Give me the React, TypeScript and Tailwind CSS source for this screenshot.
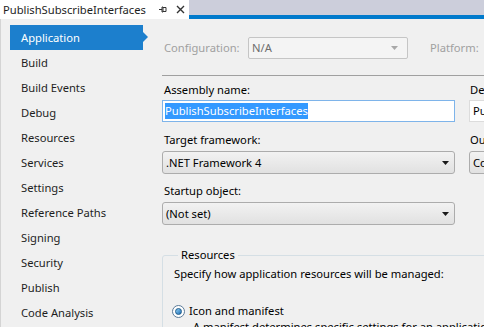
const navItems = [
  "Application",
  "Build",
  "Build Events",
  "Debug",
  "Resources",
  "Services",
  "Settings",
  "Reference Paths",
  "Signing",
  "Security",
  "Publish",
  "Code Analysis",
];

function ComboArrow({ color }: { color: string }) {
  return (
    <svg width="7" height="4" viewBox="0 0 7 4" className="shrink-0">
      <path d="M0 0h7L3.5 4z" fill={color} />
    </svg>
  );
}

function Combo({ text }: { text: string }) {
  return (
    <div className="h-[23px] flex items-center justify-between rounded-[3px] border border-[#acacac] bg-gradient-to-b from-[#f2f2f2] to-[#e1e1e1] pl-[3px] pr-[5px] text-black">
      <span>{text}</span>
      <ComboArrow color="#1a1a1a" />
    </div>
  );
}

export default function App() {
  return (
    <div
      className="w-[484px] h-[327px] overflow-hidden bg-[#f0f0f0] flex flex-col text-[11.2px] leading-[14px] text-[#1e1e1e]"
      style={{ fontFamily: '"Segoe UI", "Noto Sans", "Open Sans", sans-serif' }}
    >
      {/* tab strip */}
      <div className="h-[19px] flex shrink-0">
        <div className="w-[189px] bg-white flex items-center pl-[3px] text-[#1e1e1e]">
          <span className="flex-1">PublishSubscribeInterfaces</span>
          <span className="w-[18px] flex justify-center">
            <svg width="9" height="9" viewBox="0 0 9 9">
              <path d="M1 4.5h3M4 2v5h1V2zM5 2.5h3v4H5" stroke="#333" strokeWidth="1" fill="none" />
            </svg>
          </span>
          <span className="w-[18px] flex justify-center">
            <svg width="9" height="9" viewBox="0 0 9 9">
              <path d="M1 1l7 7M8 1L1 8" stroke="#333" strokeWidth="1.4" />
            </svg>
          </span>
        </div>
        <div className="flex-1 flex flex-col">
          <div className="h-[15px] bg-[#cccedb]" />
          <div className="h-[4px] bg-[#007acc]" />
        </div>
      </div>

      <div className="flex-1 flex border-l border-[#d4d4d4]">
        {/* sidebar */}
        <div className="w-[149px] shrink-0 pt-[6px] flex flex-col">
          {navItems.map((item, i) =>
            i === 0 ? (
              <div key={item} className="relative ml-[9px] w-[133px] h-[25px] bg-[#1c7fcd] text-white flex items-center pl-[11px]">
                {item}
                <span className="absolute right-[-5px] top-[7px] w-0 h-0 border-y-[5px] border-y-transparent border-l-[5px] border-l-[#1c7fcd]" />
              </div>
            ) : (
              <div key={item} className="h-[25px] flex items-center pl-[20px]">
                {item}
              </div>
            )
          )}
        </div>

        {/* page */}
        <div className="flex-1 pl-[12px] flex flex-col text-black">
          <div className="mt-[18px] h-[22px] flex items-center">
            <span className="w-[86px] pl-[2px] text-[#a0a0a0]">Configuration:</span>
            <div className="w-[160px] h-[22px] flex items-center justify-between rounded-[2px] border border-[#c5c5c5] bg-[#f4f4f4] pl-[3px] pr-[9px] text-[#6d6d6d]">
              <span>N/A</span>
              <ComboArrow color="#a8a8a8" />
            </div>
            <span className="ml-[22px] text-[#a0a0a0]">Platform:</span>
          </div>

          <div className="mt-[16px] h-px bg-[#a0a0a0] w-[400px]" />

          <div className="grid grid-cols-[293px_80px] gap-x-[14px] whitespace-nowrap">
            <div className="mt-[7px] pl-[2px]">Assembly name:</div>
            <div className="mt-[7px] pl-[1px]">Default namespace:</div>
            <div className="mt-[3px] h-[22px] bg-white border border-[#7eb4ea] flex items-center pl-[2px]">
              <span className="bg-[#3399ff] text-white leading-[16px]">PublishSubscribeInterfaces</span>
            </div>
            <div className="mt-[3px] h-[22px] bg-white border border-[#dcdcdc] flex items-center pl-[3px] overflow-hidden">
              PublishSubscribeInterfaces
            </div>

            <div className="mt-[11px] pl-[2px]">Target framework:</div>
            <div className="mt-[11px] pl-[1px]">Output type:</div>
            <div className="mt-[4px]">
              <Combo text=".NET Framework 4" />
            </div>
            <div className="mt-[4px] h-[23px] rounded-[3px] border border-[#acacac] bg-gradient-to-b from-[#f2f2f2] to-[#e1e1e1] flex items-center pl-[3px] overflow-hidden">
              Console Application
            </div>

            <div className="mt-[10px] pl-[2px] col-span-2">Startup object:</div>
            <div className="mt-[4px]">
              <Combo text="(Not set)" />
            </div>
          </div>

          <fieldset className="mt-[23px] border border-[#d5dfe5] rounded-[3px] w-[400px] pl-[11px] pb-[20px]">
            <legend className="ml-[4px] px-[3px]">Resources</legend>
            <div className="mt-[5px]">Specify how application resources will be managed:</div>
            <div className="mt-[23px] flex items-center">
              <span className="-ml-[2px] w-[13px] h-[13px] rounded-full border border-[#5a7a98] bg-white flex items-center justify-center">
                <span className="w-[7px] h-[7px] rounded-full bg-gradient-to-br from-[#8ed0f5] to-[#1a6eb4] border border-[#1c5a8a]" />
              </span>
              <span className="ml-[4px]">Icon and manifest</span>
            </div>
            <div className="mt-[2px] pl-[19px] whitespace-nowrap">A manifest determines specific settings for an application. To embed a custom</div>
          </fieldset>
        </div>
      </div>
    </div>
  );
}
